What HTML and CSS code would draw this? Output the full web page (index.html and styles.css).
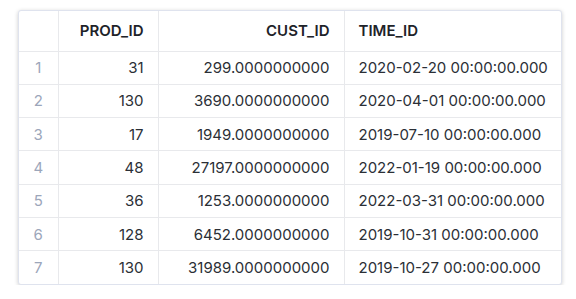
FILE: index.html
```html
<!DOCTYPE html>
<html>
<head>
<meta charset="utf-8">
<link rel="stylesheet" href="styles.css">
</head>
<body>
<div class="card">
<table class="grid">
<thead>
<tr><th class="idx"></th><th class="num c1">PROD_ID</th><th class="num c2">CUST_ID</th><th class="txt c3">TIME_ID</th></tr>
</thead>
<tbody>
<tr><td class="idx">1</td><td class="num">31</td><td class="num">299.0000000000</td><td class="txt">2020-02-20 00:00:00.000</td></tr>
<tr><td class="idx">2</td><td class="num">130</td><td class="num">3690.0000000000</td><td class="txt">2020-04-01 00:00:00.000</td></tr>
<tr><td class="idx">3</td><td class="num">17</td><td class="num">1949.0000000000</td><td class="txt">2019-07-10 00:00:00.000</td></tr>
<tr><td class="idx">4</td><td class="num">48</td><td class="num">27197.0000000000</td><td class="txt">2022-01-19 00:00:00.000</td></tr>
<tr><td class="idx">5</td><td class="num">36</td><td class="num">1253.0000000000</td><td class="txt">2022-03-31 00:00:00.000</td></tr>
<tr><td class="idx">6</td><td class="num">128</td><td class="num">6452.0000000000</td><td class="txt">2019-10-31 00:00:00.000</td></tr>
<tr><td class="idx">7</td><td class="num">130</td><td class="num">31989.0000000000</td><td class="txt">2019-10-27 00:00:00.000</td></tr>
</tbody>
</table>
</div>
</body>
</html>
```
FILE: styles.css
```css
html, body {
  margin: 0;
  padding: 0;
  background: #ffffff;
}
body {
  padding: 10px 14px 0 18px;
  font-family: Inter, "Noto Sans", sans-serif;
}
.card {
  width: 544px;
  border: 1px solid #dfe3ee;
  border-radius: 3px;
  box-shadow: 0 1px 4px rgba(0, 0, 0, 0.2);
  box-sizing: border-box;
  overflow: hidden;
  background: #fff;
}
.grid {
  border-collapse: collapse;
  width: 100%;
  table-layout: fixed;
  font-size: 15px;
  color: #2b2f36;
}
.grid th, .grid td {
  box-sizing: border-box;
  border-left: 1px solid #e8e9ec;
  border-bottom: 1px solid #e8e9ec;
  padding: 0 14px;
  white-space: nowrap;
}
.grid tr > :first-child { border-left: none; }
.grid tbody tr:last-child td { border-bottom: none; }
.grid th {
  height: 40px;
  font-weight: 600;
  color: #1e2329;
}
.grid td { height: 33.33px; }
.idx { width: 39px; padding: 0 !important; text-align: center; color: #9ca6ba; }
.c1 { width: 100px; }
.c2 { width: 186px; }
.num { text-align: right; }
.txt { text-align: left; }
```
